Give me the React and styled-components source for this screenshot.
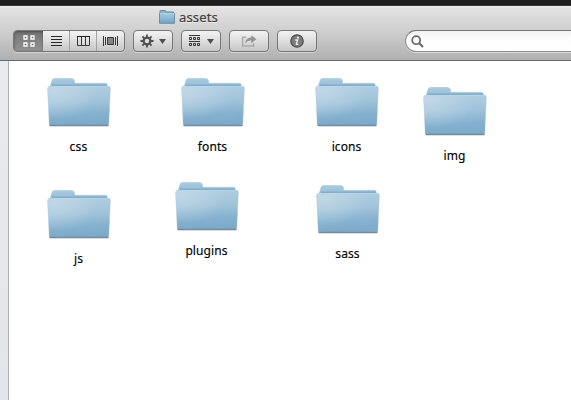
import React from 'react';
import styled, { createGlobalStyle } from 'styled-components';

const GlobalStyle = createGlobalStyle`
  * { box-sizing: border-box; }
  html, body, #root { margin: 0; height: 100%; }
  body { overflow: hidden; background: #fff; font-family: "Noto Sans", "Open Sans", sans-serif; }
  svg { display: block; }
`;

const Window = styled.main`
  display: flex;
  flex-direction: column;
  width: 571px;
  height: 400px;
  overflow: hidden;
  border-top: 5px solid #1e1e1e;
`;

const Header = styled.header`
  flex: none;
  height: 56px;
  border-top: 1px solid #39343a;
  border-bottom: 1px solid #686868;
  background: linear-gradient(#ececec 0, #e2e2e2 3px, #cecece 48%, #b0b0b0 100%);
`;

const TitleBar = styled.div`
  display: flex;
  align-items: center;
  height: 24px;
  padding: 0 0 2px 159px;
  gap: 4px;
`;

const Title = styled.h1`
  margin: 0;
  color: #404040;
  font-size: 13px;
  font-weight: 400;
  line-height: 20px;
  letter-spacing: 0.15px;
  text-shadow: 0 1px 0 rgba(255, 255, 255, 0.5);
  -webkit-text-stroke: 0.2px #404040;
`;

const Toolbar = styled.div`
  display: flex;
  height: 22px;
  padding-left: 13px;
  gap: 8px;
`;

const Control = styled.div`
  display: flex;
  flex: none;
  width: ${({ $width }) => $width}px;
  height: 22px;
  overflow: hidden;
  border: 1px solid #777;
  border-radius: 4px;
  background: linear-gradient(#f3f3f3, #dedede 50%, #c6c6c6);
  box-shadow: 0 1px 0 rgba(255, 255, 255, 0.4);
`;

const Segment = styled.button`
  display: flex;
  flex: ${({ $width }) => ($width ? `0 0 ${$width}px` : '1')};
  align-items: center;
  justify-content: center;
  gap: ${({ $gap = 5 }) => $gap}px;
  padding: 0;
  border: 0;
  border-right: ${({ $divided }) => ($divided ? '1px solid #a2a2a2' : '0')};
  background: ${({ $active }) => ($active ? 'linear-gradient(#747474, #828282 45%, #929292)' : 'transparent')};
  box-shadow: ${({ $active }) => ($active ? 'inset 0 1px 3px rgba(0,0,0,.35)' : 'none')};
`;

const SearchField = styled.div`
  display: flex;
  flex: none;
  align-items: center;
  width: 190px;
  height: 22px;
  margin-left: 80px;
  padding-left: 5px;
  border: 1px solid #909090;
  border-top-color: #747474;
  border-radius: 11px;
  background: linear-gradient(#f1f1f1, #fcfcfc 35%, #fff);
  box-shadow: 0 1px 0 rgba(255, 255, 255, 0.45);
`;

const Body = styled.div`
  display: flex;
  flex: 1;
  min-height: 0;
`;

const Sidebar = styled.aside`
  flex: none;
  width: 9px;
  border-right: 1px solid #b0b0b0;
  background: linear-gradient(#e8ecef, #e3e7eb 70%, #e1e5ee);
`;

const Desktop = styled.section`
  position: relative;
  flex: 1;
  background: #fff;
`;

const FolderItem = styled.figure`
  position: absolute;
  left: ${({ $x }) => $x}px;
  top: ${({ $y }) => $y}px;
  display: flex;
  flex-direction: column;
  align-items: center;
  width: 64px;
  margin: 0;
`;

const Label = styled.figcaption`
  margin: 10px 1px 0 0;
  color: #000;
  font-size: 12px;
  line-height: 18px;
  letter-spacing: ${({ $spacing }) => $spacing}px;
  white-space: nowrap;
  -webkit-text-stroke: 0.15px #000;
`;

const folders = [
  { name: 'css', x: 38, y: 17, spacing: 0.3 },
  { name: 'fonts', x: 172, y: 17, spacing: 0.12 },
  { name: 'icons', x: 306, y: 17, spacing: 0.08 },
  { name: 'img', x: 414, y: 26, spacing: 0.08 },
  { name: 'js', x: 38, y: 129, spacing: 0.2 },
  { name: 'plugins', x: 166, y: 121, spacing: 0.1 },
  { name: 'sass', x: 307, y: 124, spacing: 0.12 },
];

const FolderArt = () => (
  <svg width="64" height="50" viewBox="0 0 64 50">
    <defs>
      <linearGradient id="folderFront" x1="0" y1="0" x2="0.12" y2="1">
        <stop offset="0" stopColor="#b3cfe2" />
        <stop offset="0.45" stopColor="#a1c4da" />
        <stop offset="0.8" stopColor="#85b1cf" />
        <stop offset="1" stopColor="#7eabc9" />
      </linearGradient>
      <radialGradient id="folderLight" cx="0.1" cy="0.15" r="0.7">
        <stop offset="0" stopColor="#cfe0ec" stopOpacity="0.55" />
        <stop offset="1" stopColor="#cfe0ec" stopOpacity="0" />
      </radialGradient>
      <linearGradient id="folderBack" x1="0" y1="0" x2="0" y2="1">
        <stop offset="0" stopColor="#abcbdf" />
        <stop offset="1" stopColor="#8eb8d3" />
      </linearGradient>
    </defs>
    <path d="M2 47h60l-.6 1.8H3z" fill="#b5bbc0" fillOpacity=".6" />
    <path d="M3 9 5 2.5Q5.7.5 7.5.5h17q2.7 0 3 2.5v2.3H58.5q1.7 0 1.7 1.7V11H3z" fill="url(#folderBack)" stroke="#a6c5d8" strokeWidth=".6" />
    <path d="M5 7.2H60" stroke="#73a6c5" strokeWidth="1" />
    <path d="M.5 10Q.4 8 2.5 8h59q2.1 0 2 2L61.8 47H2.2z" fill="url(#folderFront)" />
    <path d="M.5 10Q.4 8 2.5 8h59q2.1 0 2 2L61.8 47H2.2z" fill="url(#folderLight)" />
    <path d="M2.5 8.4h59" stroke="#bed7e6" strokeWidth=".7" />
    <path d="M.6 10 2.2 47M63.4 10 61.8 47" stroke="#b5cddc" strokeOpacity=".7" strokeWidth=".5" />
    <path d="M2.6 47.4h58.8" stroke="#718a9b" strokeWidth="1.1" />
  </svg>
);

const SmallFolder = () => (
  <svg width="16" height="14" viewBox="0 0 16 14">
    <defs>
      <linearGradient id="smallFront" x1="0" y1="0" x2="0" y2="1">
        <stop stopColor="#a6c9dd" /><stop offset="1" stopColor="#72a4c4" />
      </linearGradient>
    </defs>
    <path d="M1 12V1.2Q1 .5 1.7.5h4.2q.8 0 .8.8V2h7.8v10z" fill="#8cb5cd" stroke="#628ba4" />
    <path d="M.5 3.5h15v9.8H.5z" fill="url(#smallFront)" stroke="#628ba4" strokeWidth=".9" />
    <path d="M1 3.5h14" stroke="#b7d3e2" strokeWidth="1" />
  </svg>
);

const GridIcon = () => (
  <svg width="12" height="12" viewBox="0 0 12 12" fill="#666" stroke="#fff" strokeWidth="1.3">
    <path d="M1 1h3v3H1zM8 1h3v3H8zM1 8h3v3H1zM8 8h3v3H8z" />
  </svg>
);

const ListIcon = () => (
  <svg width="11" height="11" viewBox="0 0 11 11">
    <path d="M0 .5h11M0 3.5h11M0 6.5h11M0 9.5h11" stroke="#282828" />
  </svg>
);

const ColumnsIcon = () => (
  <svg width="13" height="11" viewBox="0 0 13 11" fill="none" stroke="#383838">
    <path d="M.5.5h12v9H.5zM4.5 1v9M8.5 1v9" />
    <path d="M0 .5h13" stroke="#222" />
  </svg>
);

const CoverFlowIcon = () => (
  <svg width="15" height="10" viewBox="0 0 15 10" stroke="#383838">
    <path d="M.5 0v10M2.5 1v8M12.5 1v8M14.5 0v10" />
    <path d="M4.5 1.5h6v7h-6z" fill="#858585" />
  </svg>
);

const Arrow = () => (
  <svg width="7" height="5" viewBox="0 0 7 5"><path d="M0 0h7L3.5 5z" fill="#505050" /></svg>
);

const teeth = [0, 45, 90, 135, 180, 225, 270, 315];

const GearIcon = () => (
  <svg width="14" height="14" viewBox="0 0 15 15">
    <g stroke="#505050" strokeWidth="1.9">
      {teeth.map((angle) => <path key={angle} d="M7.5.5v3" transform={`rotate(${angle} 7.5 7.5)`} />)}
      <circle cx="7.5" cy="7.5" r="3.6" fill="none" strokeWidth="2.5" />
    </g>
  </svg>
);

const ArrangeIcon = () => (
  <svg width="11" height="12" viewBox="0 0 11 12" fill="none" stroke="#333">
    <path d="M0 .5h11M0 6.5h11" />
    <path d="M.5 2.5h2v2h-2zM4.5 2.5h2v2h-2zM8.5 2.5h2v2h-2zM.5 8.5h2v2h-2zM4.5 8.5h2v2h-2zM8.5 8.5h2v2h-2z" />
  </svg>
);

const ShareIcon = () => (
  <svg width="16" height="14" viewBox="0 0 17 14">
    <path d="M5.5 3H1.7v9.2h11.6V9.5" fill="none" stroke="#aaa" strokeWidth="1.6" />
    <path d="M4.5 9.8C4.6 5.7 7 3.4 11 3.4V.8l5.4 4.3L11 9.3V6.6c-3-.1-4.8.8-6.5 3.2z" fill="#959595" />
  </svg>
);

const InfoIcon = () => (
  <svg width="14" height="14" viewBox="0 0 14 14">
    <circle cx="7" cy="7" r="6.2" fill="#7c7c7c" stroke="#505050" strokeWidth="1.3" />
    <circle cx="7.9" cy="3.7" r="1.1" fill="#eee" />
    <path d="M5.2 6h2.4L6.4 10.3h2" fill="none" stroke="#eee" strokeWidth="1.3" />
  </svg>
);

const SearchIcon = () => (
  <svg width="13" height="13" viewBox="0 0 13 13" fill="none" stroke="#6d6d6d">
    <circle cx="5.2" cy="5.2" r="4" strokeWidth="1.8" />
    <path d="m8 8 4 4" strokeWidth="2.3" />
  </svg>
);

export default function App() {
  return (
    <>
      <GlobalStyle />
      <Window>
        <Header>
          <TitleBar><SmallFolder /><Title>assets</Title></TitleBar>
          <Toolbar>
            <Control $width={112}>
              <Segment aria-label="Icon view" $width={29} $active><GridIcon /></Segment>
              <Segment aria-label="List view" $width={27} $divided><ListIcon /></Segment>
              <Segment aria-label="Column view" $width={27} $divided><ColumnsIcon /></Segment>
              <Segment aria-label="Cover flow"><CoverFlowIcon /></Segment>
            </Control>
            <Control $width={40}><Segment aria-label="Actions"><GearIcon /><Arrow /></Segment></Control>
            <Control $width={40}><Segment aria-label="Arrange" $gap={7}><ArrangeIcon /><Arrow /></Segment></Control>
            <Control $width={40}><Segment aria-label="Share"><ShareIcon /></Segment></Control>
            <Control $width={40}><Segment aria-label="Info"><InfoIcon /></Segment></Control>
            <SearchField><SearchIcon /></SearchField>
          </Toolbar>
        </Header>
        <Body>
          <Sidebar />
          <Desktop>
            {folders.map(({ name, x, y, spacing }) => (
              <FolderItem key={name} $x={x} $y={y}>
                <FolderArt />
                <Label $spacing={spacing}>{name}</Label>
              </FolderItem>
            ))}
          </Desktop>
        </Body>
      </Window>
    </>
  );
}
